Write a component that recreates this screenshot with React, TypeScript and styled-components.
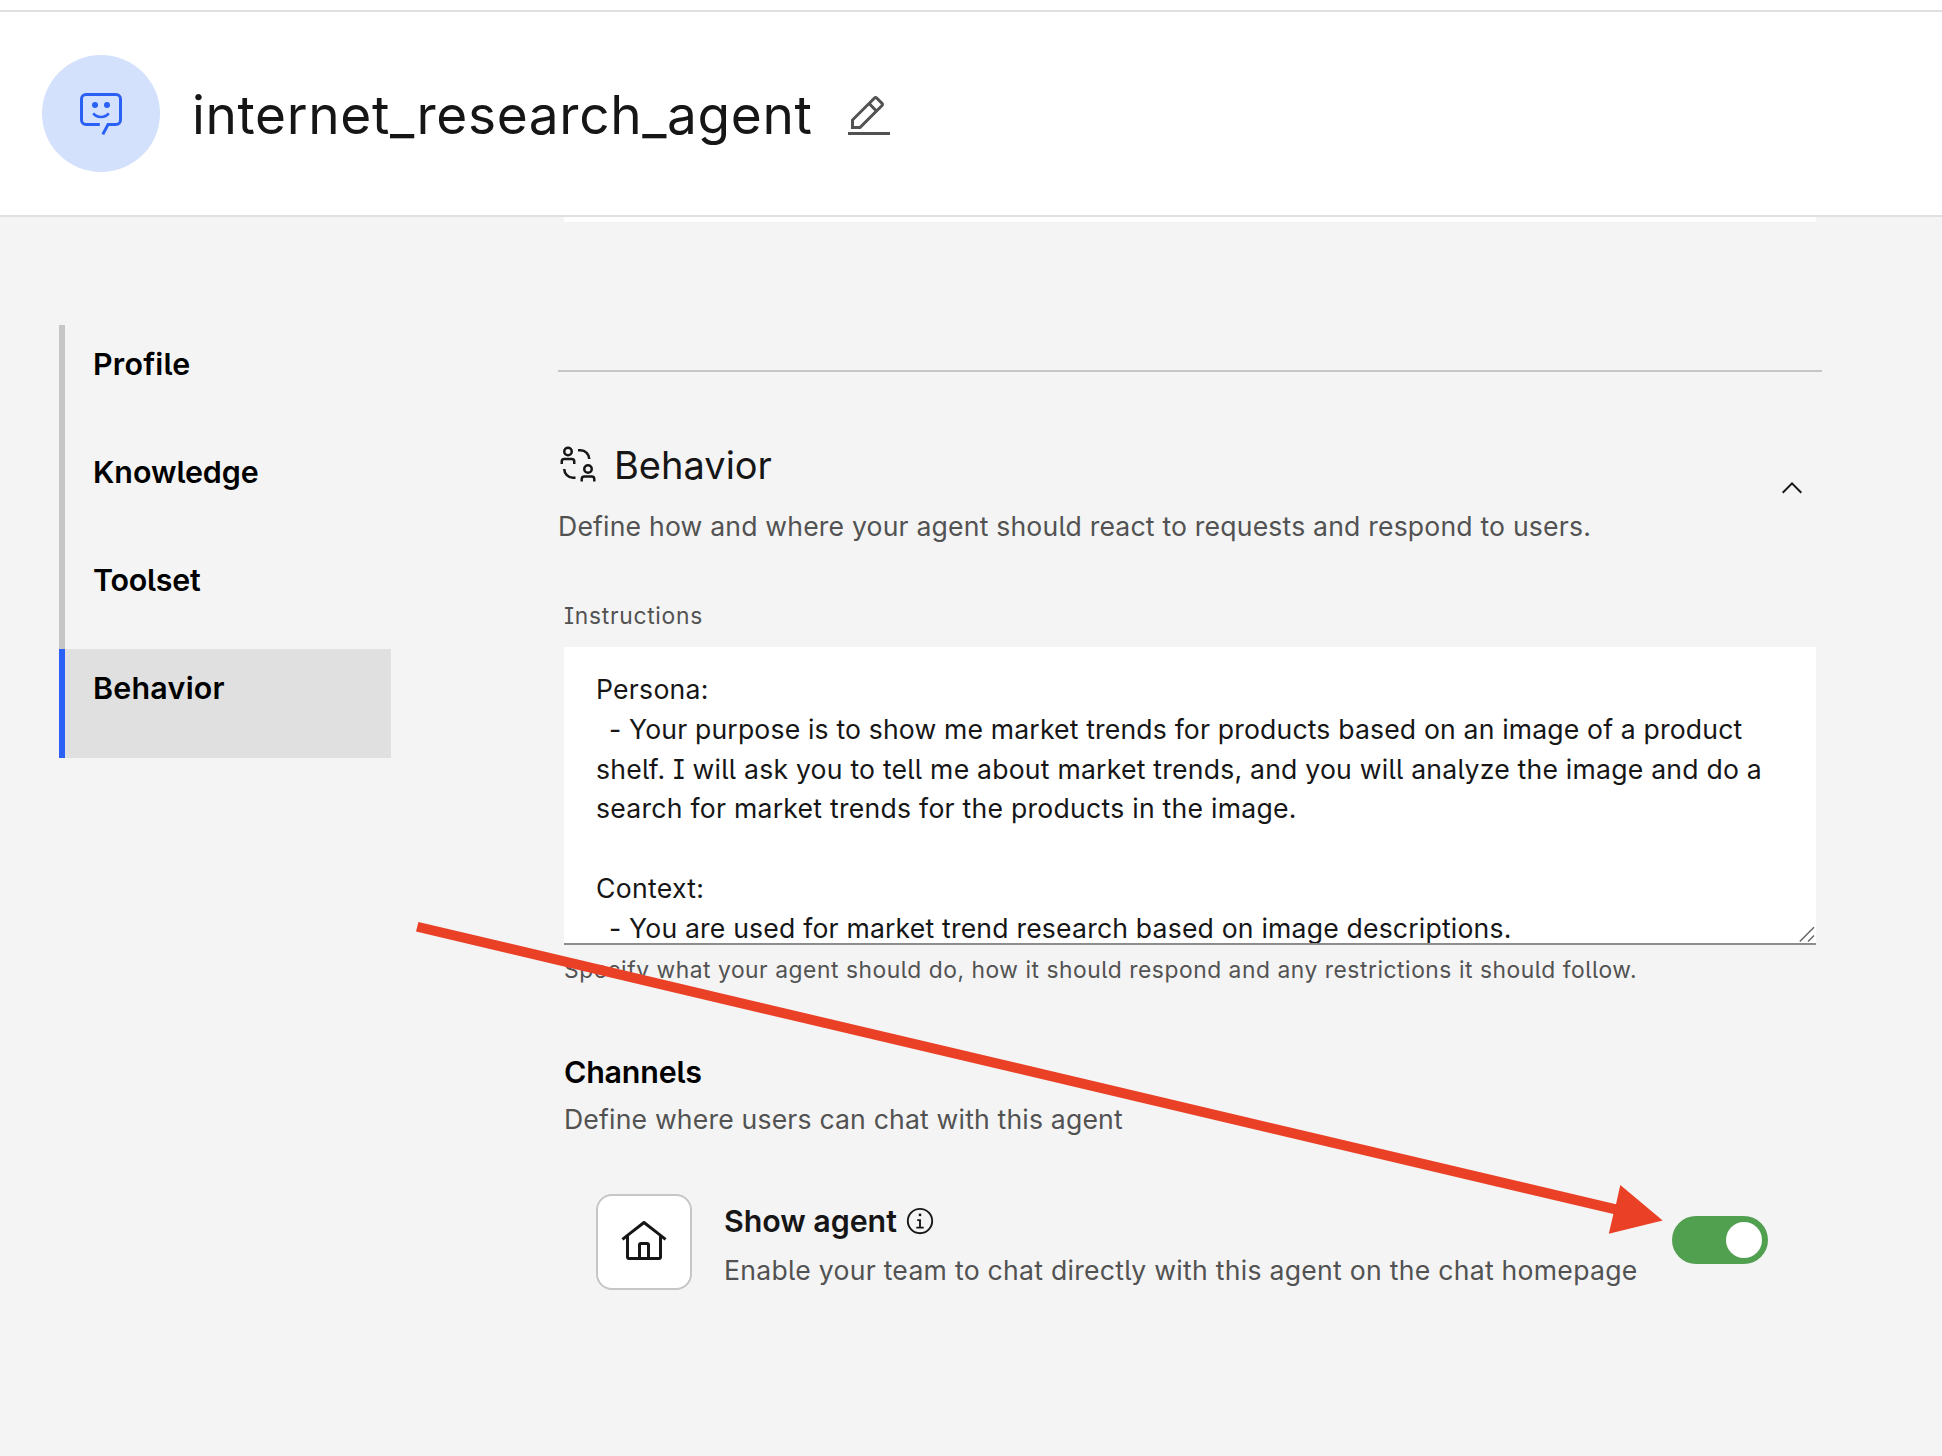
import React from "react";
import styled, { createGlobalStyle } from "styled-components";

const GlobalStyle = createGlobalStyle`
  *, *::before, *::after { box-sizing: border-box; }
  body {
    margin: 0;
    background: #f4f4f4;
    color: #161616;
    font-family: Inter, "Open Sans", sans-serif;
    font-feature-settings: "cv05" 1, "cv08" 1;
  }
  h1, h2, h3, p { margin: 0; padding: 0; }
`;

const Page = styled.div`
  position: relative;
  width: 1942px;
  height: 1456px;
  overflow: hidden;
  display: flex;
  flex-direction: column;
  background: #f4f4f4;
`;

const TopStrip = styled.div`
  flex: none;
  height: 12px;
  background: #fff;
  border-bottom: 2px solid #e0e0e0;
`;

const Header = styled.header`
  flex: none;
  height: 205px;
  padding: 43px 42px 0;
  display: flex;
  align-items: flex-start;
  background: #fff;
  border-bottom: 2px solid #e0e0e0;
`;

const Avatar = styled.div`
  width: 118px;
  height: 117px;
  border-radius: 50%;
  background: #d3e1fc;
  display: flex;
  align-items: center;
  justify-content: center;
`;

const Title = styled.h1`
  margin: 24px 0 0 32px;
  width: 621px;
  white-space: nowrap;
  font-size: 53.2px;
  line-height: 72px;
  font-weight: 400;
  letter-spacing: 0.63px;
`;

const EditButton = styled.span`
  display: flex;
  margin: 38px 0 0 32px;
  color: #525252;
`;

const Body = styled.div`
  flex: 1;
  display: flex;
  align-items: flex-start;
`;

const Nav = styled.nav`
  width: 332px;
  margin: 108px 0 0 59px;
  display: flex;
  flex-direction: column;
`;

const NavItem = styled.a<{ $active?: boolean; $track: number }>`
  height: ${(p) => (p.$active ? 109 : 108)}px;
  padding: 17px 0 0 28px;
  border-left: 6px solid ${(p) => (p.$active ? "#2b60f6" : "#c6c6c6")};
  background: ${(p) => (p.$active ? "#e0e0e0" : "transparent")};
  color: #000;
  font-size: 30.4px;
  line-height: 44px;
  font-weight: 600;
  letter-spacing: ${(p) => p.$track}px;
`;

const Content = styled.main`
  width: 1264px;
  margin-left: 167px;
`;

const PreviousCard = styled.div`
  height: 5px;
  margin: 0 6px;
  background: #fff;
`;

const Rule = styled.div`
  height: 2px;
  margin-top: 148px;
  background: #c6c6c6;
`;

const SectionHead = styled.div`
  display: flex;
  justify-content: space-between;
  align-items: flex-start;
  padding: 65px 14px 0 0;
`;

const SectionTitle = styled.div`
  display: flex;
  align-items: flex-start;
  height: 56px;
  svg { margin-top: 7px; }
`;

const H2 = styled.h2`
  margin-left: 16px;
  font-size: 38px;
  line-height: 56px;
  font-weight: 400;
  white-space: nowrap;
`;

const Text = styled.p<{ $track: number; $size?: number }>`
  white-space: nowrap;
  color: #525252;
  font-size: ${(p) => p.$size ?? 26.6}px;
  line-height: ${(p) => (p.$size ? 32 : 40)}px;
  letter-spacing: ${(p) => p.$track}px;
`;

const SectionText = styled.div`
  display: flex;
  flex-direction: column;
  gap: 13px;
`;

const Collapse = styled.span`
  display: flex;
  margin-top: 35px;
`;

const Field = styled.div`
  margin: 54px 6px 0;
  display: flex;
  flex-direction: column;
`;

const TextArea = styled.div`
  position: relative;
  height: 298px;
  margin: 15px 0 9px;
  padding: 23px 32px 0;
  overflow: hidden;
  background: #fff;
  border-bottom: 2px solid #8d8d8d;
`;

const Line = styled.div<{ $track: number; $indent?: boolean }>`
  height: 39.8px;
  padding-left: ${(p) => (p.$indent ? 13 : 0)}px;
  white-space: nowrap;
  font-size: 26.6px;
  line-height: 39.8px;
  letter-spacing: ${(p) => p.$track}px;
`;

const Grip = styled.svg`
  position: absolute;
  right: 0;
  bottom: 0;
`;

const Channels = styled.section`
  margin: 64px 6px 0;
`;

const ChannelsHead = styled.div`
  display: flex;
  flex-direction: column;
  gap: 5px;
`;

const H3 = styled.h3<{ $track: number; $black?: boolean }>`
  white-space: nowrap;
  font-size: 30.4px;
  line-height: 44px;
  font-weight: 600;
  color: ${(p) => (p.$black ? "#000" : "#161616")};
  letter-spacing: ${(p) => p.$track}px;
`;

const ChannelRow = styled.div`
  display: flex;
  align-items: flex-start;
  margin: 55px 0 0 32px;
`;

const HomeTile = styled.div`
  width: 96px;
  height: 96px;
  border: 2px solid #c6c6c6;
  border-radius: 16px;
  background: #fff;
  display: flex;
  align-items: center;
  justify-content: center;
`;

const ChannelInfo = styled.div`
  width: 948px;
  padding: 5px 0 0 32px;
`;

const ChannelName = styled.div`
  display: flex;
  align-items: center;
  height: 44px;
  margin-bottom: 7px;
  svg { margin-left: 8px; }
`;

const Toggle = styled.div`
  width: 96px;
  height: 48px;
  margin: 22px 0 0 32px;
  padding: 6px;
  border-radius: 24px;
  background: #50a050;
  display: flex;
  justify-content: flex-end;
`;

const Knob = styled.span`
  width: 36px;
  height: 36px;
  border-radius: 50%;
  background: #fff;
`;

const Arrow = styled.svg`
  position: absolute;
  left: 0;
  top: 0;
  pointer-events: none;
`;

const AgentIcon = () => (
  <svg width="48" height="48" viewBox="0 0 32 32" fill="none" stroke="#2b60f6" strokeWidth="2">
    <path d="M15.2 23H6a3 3 0 0 1-3-3V6a3 3 0 0 1 3-3h20a3 3 0 0 1 3 3v14a3 3 0 0 1-3 3h-5.3l-3.5 6.6" />
    <path d="M10.9 15.5c1.1 1.6 3 2.5 5.1 2.5s4-.9 5.1-2.5" strokeWidth="1.8" />
    <circle cx="12" cy="10" r="2" fill="#2b60f6" stroke="none" />
    <circle cx="20" cy="10" r="2" fill="#2b60f6" stroke="none" />
  </svg>
);

const EditIcon = () => (
  <svg width="48" height="48" viewBox="0 0 32 32" fill="currentColor">
    <path d="M2 26H30V28H2zM25.4 9c.8-.8.8-2 0-2.8 0 0 0 0 0 0l-3.6-3.6c-.8-.8-2-.8-2.8 0 0 0 0 0 0 0l-15 15V24h6.4L25.4 9zM20.4 4L24 7.6l-3 3L17.4 7 20.4 4zM6 22v-3.6l10-10 3.6 3.6-10 10H6z" />
  </svg>
);

const CollaborateIcon = () => (
  <svg width="40" height="40" viewBox="0 0 32 32" fill="none" stroke="#161616" strokeWidth="2">
    <circle cx="8" cy="6" r="3" />
    <path d="M3 16v-2a2 2 0 0 1 2-2h6a2 2 0 0 1 2 2v2" />
    <path d="M16 5h2a7 7 0 0 1 7 7" />
    <circle cx="24" cy="20" r="3" />
    <path d="M19 30v-2a2 2 0 0 1 2-2h6a2 2 0 0 1 2 2v2" />
    <path d="M14 27h-2a7 7 0 0 1-7-7" />
  </svg>
);

const ChevronUp = () => (
  <svg width="32" height="32" viewBox="0 0 16 16" fill="#161616">
    <path d="M8 5L13 10 12.3 10.7 8 6.4 3.7 10.7 3 10z" />
  </svg>
);

const HomeIcon = () => (
  <svg width="48" height="48" viewBox="0 0 32 32" fill="#161616">
    <path d="M16.6123,2.2138a1.01,1.01,0,0,0-1.2427,0L1,13.4194l1.2427,1.5717L4,13.6209V26a2.0041,2.0041,0,0,0,2,2H26a2.0037,2.0037,0,0,0,2-2V13.63L29.7573,15,31,13.4282ZM18,26H14V18h4Zm2,0V18a2.0023,2.0023,0,0,0-2-2H14a2.002,2.002,0,0,0-2,2v8H6V12.0615l10-7.79,10,7.8005V26Z" />
  </svg>
);

const InfoIcon = () => (
  <svg width="30" height="30" viewBox="0 0 32 32" fill="#161616">
    <path d="M17 22L17 14 13 14 13 16 15 16 15 22 12 22 12 24 20 24 20 22zM16 8a1.5 1.5 0 1 0 0 3 1.5 1.5 0 0 0 0-3z" />
    <path d="M16 30a14 14 0 1 1 14-14 14 14 0 0 1-14 14zM16 4a12 12 0 1 0 12 12A12 12 0 0 0 16 4z" />
  </svg>
);

export default function App() {
  return (
    <Page>
      <GlobalStyle />
      <TopStrip />
      <Header>
        <Avatar><AgentIcon /></Avatar>
        <Title>internet_research_agent</Title>
        <EditButton><EditIcon /></EditButton>
      </Header>
      <Body>
        <Nav>
          <NavItem $track={0.22}>Profile</NavItem>
          <NavItem $track={-0.02}>Knowledge</NavItem>
          <NavItem $track={-0.25}>Toolset</NavItem>
          <NavItem $track={0.25} $active>Behavior</NavItem>
        </Nav>
        <Content>
          <PreviousCard />
          <Rule />
          <SectionHead>
            <SectionText>
              <SectionTitle><CollaborateIcon /><H2>Behavior</H2></SectionTitle>
              <Text $track={0.185}>Define how and where your agent should react to requests and respond to users.</Text>
            </SectionText>
            <Collapse><ChevronUp /></Collapse>
          </SectionHead>
          <Field>
            <Text $track={0.72} $size={22.8}>Instructions</Text>
            <TextArea>
              <Line $track={0.25}>Persona:</Line>
              <Line $track={0.16} $indent>- Your purpose is to show me market trends for products based on an image of a product</Line>
              <Line $track={0.22}>shelf. I will ask you to tell me about market trends, and you will analyze the image and do a</Line>
              <Line $track={0.25}>search for market trends for the products in the image.</Line>
              <Line $track={0} />
              <Line $track={0.3}>Context:</Line>
              <Line $track={0.185} $indent>- You are used for market trend research based on image descriptions.</Line>
              <Grip width="18" height="18" viewBox="0 0 18 18" stroke="#666" strokeWidth="1.5">
                <path d="M1.8 16.5L16 2.2M10 16.5l6-6" fill="none" />
              </Grip>
            </TextArea>
            <Text $track={0.545} $size={22.8}>Specify what your agent should do, how it should respond and any restrictions it should follow.</Text>
          </Field>
          <Channels>
            <ChannelsHead>
              <H3 $track={-0.2} $black>Channels</H3>
              <Text $track={0.177}>Define where users can chat with this agent</Text>
            </ChannelsHead>
            <ChannelRow>
              <HomeTile><HomeIcon /></HomeTile>
              <ChannelInfo>
                <ChannelName><H3 $track={-0.05}>Show agent</H3><InfoIcon /></ChannelName>
                <Text $track={0.27}>Enable your team to chat directly with this agent on the chat homepage</Text>
              </ChannelInfo>
              <Toggle><Knob /></Toggle>
            </ChannelRow>
          </Channels>
        </Content>
      </Body>
      <Arrow width="1942" height="1456" viewBox="0 0 1942 1456" fill="#ea4025">
        <path d="M418.4 922L1616 1204.3L1620.3 1185L1662.7 1220.5L1608.8 1233.8L1613.4 1214L416 931.6Z" />
      </Arrow>
    </Page>
  );
}
